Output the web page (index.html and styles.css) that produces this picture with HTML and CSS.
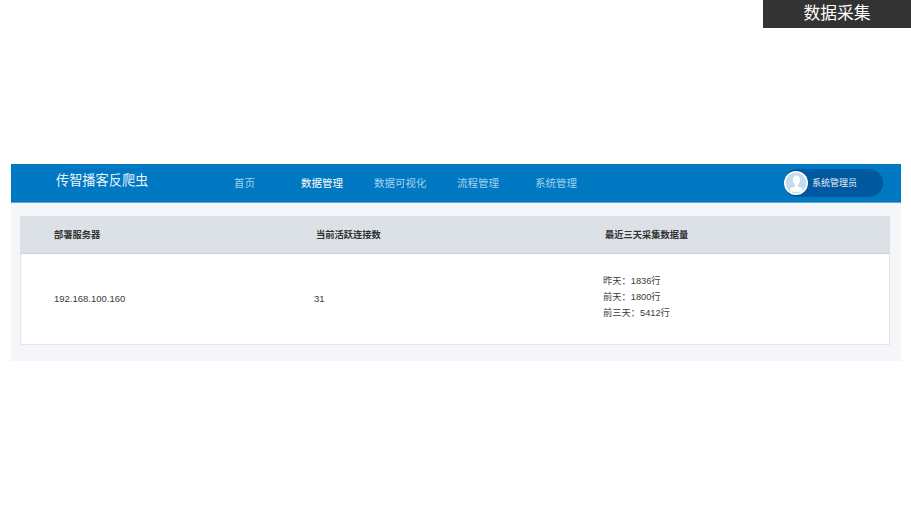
FILE: index.html
```html
<!DOCTYPE html>
<html lang="zh-CN">
<head>
<meta charset="utf-8">
<title>数据采集</title>
<link rel="stylesheet" href="styles.css">
</head>
<body>
<div class="tagbar"><div class="tag">数据采集</div></div>
<main class="app">
  <header class="nav">
    <div class="brand">传智播客反爬虫</div>
    <nav class="menu">
      <a class="item i1">首页</a>
      <a class="item i2 active">数据管理</a>
      <a class="item i3">数据可视化</a>
      <a class="item i4">流程管理</a>
      <a class="item i5">系统管理</a>
    </nav>
    <div class="user">
      <svg class="avatar" viewBox="0 0 24 24" width="24" height="24" aria-hidden="true">
        <circle cx="12" cy="12" r="12" fill="#fff"/>
        <circle cx="12" cy="12" r="10.4" fill="#c5dcec"/>
        <path d="M12 4.2c2.500 0 4.100 2 4.100 4.600 0 2.200-1 4-2.200 5v1.600c1.600.5 3.600 1.200 4.800 2.200.2 1-.4 2.600-1.400 3.200H7.700c-1-.6-1.600-2.200-1.400-3.200 1.200-1 3.200-1.700 4.800-2.200v-1.600c-1.200-1-2.200-2.800-2.200-5 0-2.600 1.600-4.600 4.100-4.600z" fill="#fff"/>
      </svg>
      <span class="uname">系统管理员</span>
    </div>
  </header>
  <section class="content">
    <div class="table">
      <div class="row head">
        <div class="c1">部署服务器</div>
        <div class="c2">当前活跃连接数</div>
        <div class="c3">最近三天采集数据量</div>
      </div>
      <div class="row body">
        <div class="c1">192.168.100.160</div>
        <div class="c2">31</div>
        <div class="c3 stats">
          <div>昨天：1836行</div>
          <div>前天：1800行</div>
          <div>前三天：5412行</div>
        </div>
      </div>
    </div>
  </section>
</main>
</body>
</html>
```

FILE: styles.css
```css
* { box-sizing: border-box; }
html, body { margin: 0; padding: 0; background: #fff; }
body {
  width: 911px;
  height: 525px;
  overflow: hidden;
  font-family: "Liberation Sans", "Noto Sans CJK SC", sans-serif;
}
.tagbar { display: flex; justify-content: flex-end; height: 28px; }
.tag {
  width: 148px;
  height: 28px;
  background: #333;
  color: #fff;
  font-size: 16.8px;
  line-height: 28px;
  text-align: center;
}
.app {
  width: 890px;
  margin: 136px 0 0 11px;
  background: #f4f6fa;
}
.nav {
  display: flex;
  align-items: center;
  height: 39px;
  padding-bottom: 1px;
  background: #0078c2;
  color: #fff;
  border-bottom: 1px solid #5aa9da;
}
.brand { width: 223px; padding-left: 45px; padding-bottom: 4px; font-size: 13.2px; line-height: 32px; color: #eaf4fb; }
.menu { display: flex; width: 550px; font-size: 10.5px; color: #a3d2ee; }
.item { display: block; white-space: nowrap; }
.i1 { width: 67px; }
.i2 { width: 73px; }
.i3 { width: 83px; }
.i4 { width: 78px; }
.active { color: #fff; }
.user {
  display: flex;
  align-items: center;
  gap: 4px;
  width: 99px;
  height: 28px;
  border-radius: 14px;
  background: #00589f;
  font-size: 9px;
  color: #e3f0f8;
}
.avatar { display: block; flex: none; }
.content { padding: 13px 11px 16px 9px; }
.table { background: #fff; border: 1px solid #e3e6ea; border-top: 0; }
.row { display: flex; }
.head {
  height: 38px;
  padding-bottom: 2px;
  align-items: center;
  background: #dbe1e6;
  border-bottom: 1px solid #cfd3d8;
  font-size: 9.25px;
  font-weight: bold;
  color: #333;
  margin: 0 -1px;
}
.body { height: 90px; padding-bottom: 2px; align-items: center; font-size: 9.5px; color: #3a3a3a; }
.head .c1 { width: 296px; padding-left: 34px; }
.head .c2 { width: 289px; }
.body .c1 { width: 293px; padding-left: 33px; }
.body .c2 { width: 289px; }
.stats { font-size: 9.25px; line-height: 16px; margin-top: -3px; }
```
